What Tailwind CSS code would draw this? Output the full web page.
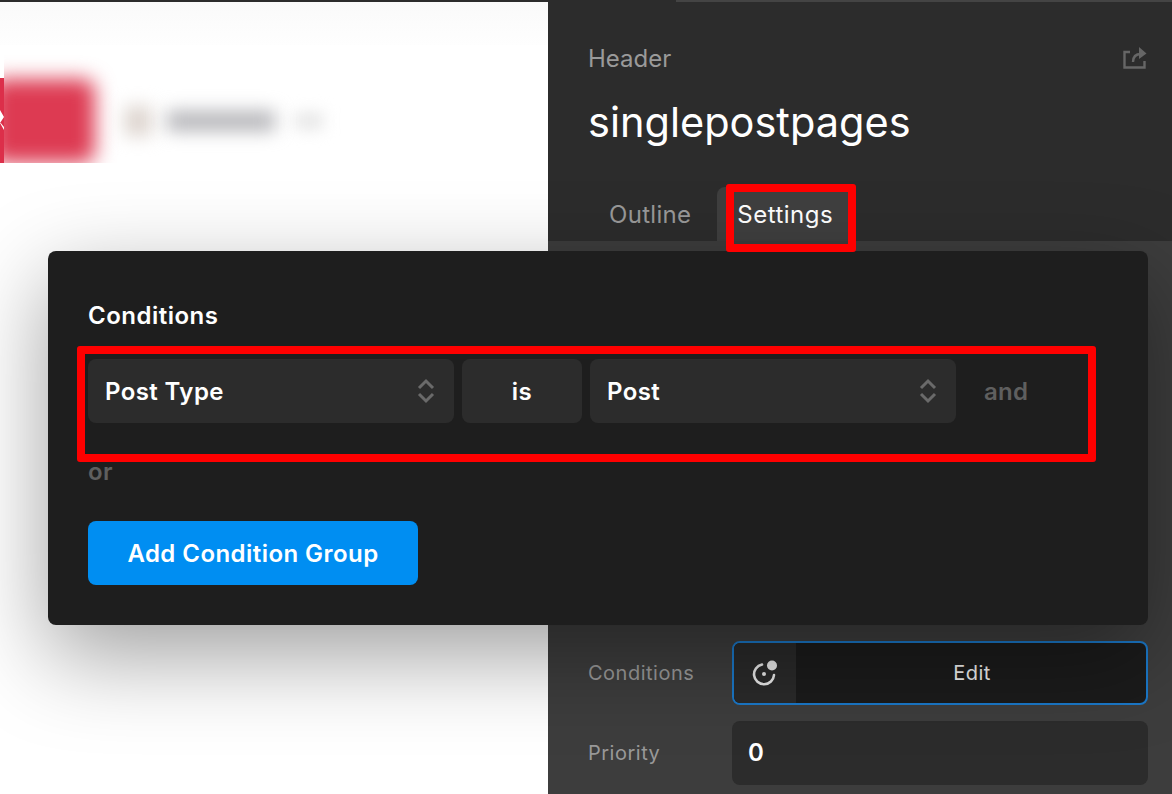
<!DOCTYPE html>
<html lang="en">
<head>
  <meta charset="UTF-8">
  <meta name="viewport" content="width=device-width, initial-scale=1.0">
  <title>Conditions</title>
  <script src="https://cdn.jsdelivr.net/npm/@tailwindcss/browser@4"></script>
</head>
<body class="w-[1172px] h-[794px] overflow-hidden relative font-['Inter',sans-serif] bg-white">
  <div class="flex h-full">
    <!-- Blurred page preview -->
    <div class="w-[548px] h-full bg-white flex flex-col">
      <div class="h-[2px] bg-[#2c2c2c]"></div>
      <div class="h-[43px] bg-gradient-to-b from-[#fafafa] to-[#fefefe]"></div>
      <div class="h-[118px] flex overflow-hidden">
        <svg class="w-[4px] h-[85px] mt-[33px] shrink-0" viewBox="0 0 4 85"><rect width="4" height="85" fill="#dc2f4a"/><path d="M0 32l4 7-4 6 4 7v-3l-4-5z" fill="#ffffff"/></svg>
        <div class="w-[400px] h-[118px] overflow-hidden flex items-center pt-[34px]">
          <div class="w-[104px] h-[84px] -ml-[13px] bg-[#dd3a52] rounded-xl blur-[10px] shrink-0"></div>
          <div class="w-[26px] h-[30px] ml-[30px] bg-[#dcd3cd] blur-[9px] shrink-0"></div>
          <div class="w-[108px] h-[20px] ml-[16px] bg-[#b4b4b8] blur-[9px] shrink-0"></div>
          <div class="w-[28px] h-[16px] ml-[20px] bg-[#e4e4e4] blur-[8px] shrink-0"></div>
        </div>
      </div>
    </div>

    <!-- Right panel -->
    <div class="w-[624px] h-full bg-[#3d3d3d] flex flex-col">
      <div class="bg-[#2c2c2c] h-[241px] flex flex-col">
        <div class="h-[2px] ml-[128px] bg-[#444444]"></div>
        <div class="flex items-center justify-between pl-[40px] pr-[25px] pt-[42px]">
          <span class="text-[24px] leading-[30px] text-[#9a9a9a]">Header</span>
          <svg class="w-[24px] h-[23px] -mt-[3px]" viewBox="0 0 24 23" fill="none" stroke="#666666" stroke-width="2.4">
            <path d="M7 6H1.500v15.500h20V15"/>
            <path d="M10 16c0-5 3-8 8-8"/>
            <path d="M16 1l7.500 6.500-7.500 5.500z" fill="#666666" stroke="none"/>
          </svg>
        </div>
        <h1 class="pl-[40px] mt-[23px] text-[41.5px] leading-[50px] text-white">singlepostpages</h1>
        <div class="flex mt-auto pl-[41px] items-end">
          <div class="h-[54px] flex items-center pl-[20px] pr-[20px] pt-[2px] text-[24px] tracking-[0.3px] text-[#999999]">Outline</div>
          <div class="h-[54px] ml-[6px] flex items-center px-[20px] pt-[2px] w-[133px] rounded-t-lg bg-[#3f3f3f] text-[24px] tracking-[0.5px] text-white">Settings</div>
        </div>
      </div>

      <div class="flex-1 flex flex-col justify-end pl-[40px] pr-[24px] pb-[9px] gap-[16px]">
        <div class="flex items-center">
          <span class="w-[144px] text-[20px] tracking-[0.5px] text-[#999999]">Conditions</span>
          <div class="flex-1 h-[64px] flex rounded-lg border-2 border-[#1b78c8] bg-[#1b1b1b] overflow-hidden">
            <div class="w-[62px] bg-[#2a2a2a] flex items-center justify-center">
              <svg class="w-[28px] h-[28px]" viewBox="0 0 28 28" fill="none">
                <path d="M11 5.500A10 10 0 1 0 23 16" stroke="#e8e8e8" stroke-width="2.600" stroke-linecap="round"/>
                <circle cx="21" cy="6.500" r="5" fill="#e8e8e8"/>
                <circle cx="13" cy="15" r="2" fill="#e8e8e8"/>
              </svg>
            </div>
            <div class="flex-1 flex items-center justify-center pl-[2px] text-[20px] tracking-[0.4px] text-[#eeeeee]">Edit</div>
          </div>
        </div>
        <div class="flex items-center">
          <span class="w-[144px] text-[20px] tracking-[0.5px] text-[#999999]">Priority</span>
          <div class="flex-1 h-[64px] rounded-lg bg-[#2c2c2c] flex items-center px-[16px] text-[24px] font-semibold text-white">0</div>
        </div>
      </div>
    </div>
  </div>

  <!-- Conditions modal -->
  <div class="absolute left-[48px] top-[251px] w-[1100px] h-[374px] rounded-lg bg-[#1e1e1e] shadow-[0_30px_90px_rgba(0,0,0,0.38)] px-[40px] pt-[49px]">
    <h2 class="text-[24px] leading-[32px] font-semibold tracking-[0.5px] text-white">Conditions</h2>
    <div class="flex items-center gap-[8px] mt-[27px]">
      <div class="w-[366px] h-[64px] rounded-lg bg-[#2c2c2c] flex items-center justify-between pl-[17px] pr-[18px] pt-[2px] text-[24px] font-semibold tracking-[0.4px] text-white">
        <span>Post Type</span>
        <svg class="w-[20px] h-[26px] -mt-[2px]" viewBox="0 0 20 26" fill="none" stroke="#6a6a6a" stroke-width="3"><path d="M3 10l7-7 7 7"/><path d="M3 16l7 7 7-7"/></svg>
      </div>
      <div class="w-[120px] h-[64px] rounded-lg bg-[#2c2c2c] flex items-center justify-center pt-[2px] text-[24px] font-semibold tracking-[0.4px] text-white">is</div>
      <div class="w-[366px] h-[64px] rounded-lg bg-[#2c2c2c] flex items-center justify-between pl-[17px] pr-[18px] pt-[2px] text-[24px] font-semibold tracking-[0.4px] text-white">
        <span>Post</span>
        <svg class="w-[20px] h-[26px] -mt-[2px]" viewBox="0 0 20 26" fill="none" stroke="#6a6a6a" stroke-width="3"><path d="M3 10l7-7 7 7"/><path d="M3 16l7 7 7-7"/></svg>
      </div>
      <span class="ml-[20px] pt-[2px] text-[24px] font-semibold tracking-[0.3px] text-[#5f5f5f]">and</span>
    </div>
    <div class="mt-[33px] text-[24px] leading-[32px] font-semibold tracking-[0.4px] text-[#5f5f5f]">or</div>
    <button class="mt-[33px] w-[330px] h-[64px] rounded-lg bg-[#008ef2] pt-[2px] text-[24px] font-semibold tracking-[0.45px] text-white">Add Condition Group</button>
  </div>

  <!-- Red annotation boxes -->
  <div class="absolute left-[726px] top-[184px] w-[130px] h-[68px] border-[8px] border-[#ff0000] rounded-[3px]"></div>
  <div class="absolute left-[77px] top-[346px] w-[1019px] h-[116px] border-[8px] border-[#ff0000] rounded-[3px]"></div>
</body>
</html>
